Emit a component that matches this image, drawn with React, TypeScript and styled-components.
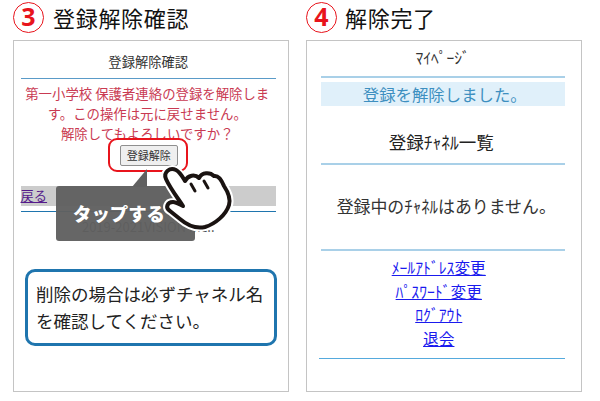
import React from "react";
import styled, { createGlobalStyle } from "styled-components";

const Global = createGlobalStyle`
  html, body { margin: 0; padding: 0; background: #fff; }
  body { font-family: "Noto Sans CJK JP", "Noto Sans", sans-serif; width: 600px; height: 401px; overflow: hidden; }
`;

const Page = styled.div`
  display: flex;
  gap: 17px;
  padding: 2px 0 0 13px;
`;
const Column = styled.section`
  display: flex;
  flex-direction: column;
  width: 276px;
`;
const Heading = styled.header`
  display: flex;
  align-items: center;
  gap: ${(p: { $gap: number }) => p.$gap}px;
  height: 31px;
  margin-bottom: 7px;
`;
const StepBadge = styled.span`
  box-sizing: border-box;
  width: 31px;
  height: 31px;
  flex: none;
  border: 1.5px solid #e8141c;
  border-radius: 50%;
  color: #e8141c;
  font: 700 25px/27px "Noto Sans", sans-serif;
  text-align: center;
`;
const HeadingText = styled.h2`
  margin: 0;
  font-size: 22px;
  font-weight: 400;
  line-height: 31px;
  color: #111;
  letter-spacing: 0.7px;
`;
const Panel = styled.div`
  position: relative;
  box-sizing: border-box;
  height: 352px;
  border: 1.5px solid #c4c4c4;
  border-bottom-width: 1px;
  overflow: hidden;
`;
const LeftInner = styled.div`
  display: flex;
  flex-direction: column;
  padding: 0 12px 0 6.5px;
`;
const PageTitle = styled.div`
  height: 37px;
  line-height: 42px;
  font-size: 13.3px;
  color: #333;
  text-align: center;
  border-bottom: 1px solid #5a9bc8;
`;
const Warning = styled.p`
  margin: 4px 0 0 -2px;
  font-size: 13.4px;
  line-height: 20px;
  color: #c93a52;
  text-align: center;
`;
const ConfirmButton = styled.button`
  align-self: center;
  box-sizing: border-box;
  width: 58px;
  height: 21px;
  margin-top: 2px;
  padding: 0;
  border: 1px solid #8f8f8f;
  border-radius: 2px;
  background: #efefef;
  color: #333;
  font: 400 11px/19px "Noto Sans CJK JP", sans-serif;
  position: relative;
  left: 0.5px;
`;
const BackBar = styled.div`
  margin-top: 20px;
  height: 20px;
  background: #cccccc;
  font-size: 13.3px;
  line-height: 20px;
`;
const BackLink = styled.a`
  color: #551a8b;
  text-decoration: underline;
`;
const FooterRule = styled.div`
  margin-top: 5px;
  height: 1px;
  background: #1f75ae;
`;
const Copyright = styled.div`
  margin-top: 5px;
  font-size: 13px;
  line-height: 20px;
  color: #444;
  text-align: center;
`;
const TapHighlight = styled.div`
  position: absolute;
  left: 94px;
  top: 97px;
  width: 80px;
  height: 34px;
  box-sizing: border-box;
  border: 2px solid #e8141c;
  border-radius: 9px;
`;
const Callout = styled.div`
  position: absolute;
  left: 42px;
  top: 145px;
  width: 139px;
  height: 55px;
  box-sizing: border-box;
  padding-left: 17px;
  border-radius: 3px;
  background: rgba(96, 96, 96, 0.96);
  color: #fff;
  font-size: 18.4px;
  font-weight: 900;
  line-height: 55px;
`;
const CalloutTail = styled.svg`
  position: absolute;
  left: 118px;
  top: 126px;
`;
const Hand = styled.svg`
  position: absolute;
  left: 146px;
  top: 123px;
`;
const NoteBox = styled.div`
  position: absolute;
  left: 11px;
  top: 228px;
  width: 252px;
  height: 77px;
  box-sizing: border-box;
  padding: 8px 0 0 8px;
  border: 3px solid #1f75ae;
  border-radius: 10px;
  background: #fff;
  font-size: 17.5px;
  line-height: 27px;
  color: #222;
`;
const RightInner = styled.div`
  display: flex;
  flex-direction: column;
  padding: 0 16.5px 0 14px;
`;
const Rule = styled.div`
  height: 2px;
  background: #a9d0e8;
`;
const MyPageTitle = styled.div`
  height: 35px;
  line-height: 32px;
  font-size: 15.5px;
  color: #333;
  text-align: center;
`;
const Notice = styled.div`
  height: 24px;
  margin-top: 4px;
  padding-left: 4px;
  background: #e0f0fa;
  color: #3d8fc0;
  font-size: 16.4px;
  line-height: 24px;
  text-align: center;
`;
const ListTitle = styled.div`
  height: 57px;
  line-height: 72px;
  font-size: 17.5px;
  padding-right: 3px;
  color: #222;
  text-align: center;
`;
const EmptyText = styled.div`
  height: 84px;
  padding-left: 7px;
  line-height: 81px;
  font-size: 16.9px;
  color: #333;
  text-align: center;
`;
const Links = styled.nav`
  display: flex;
  flex-direction: column;
  align-items: center;
  padding: 5px 8px 0 0;
  height: 107px;
  box-sizing: border-box;
`;
const MenuLink = styled.a`
  color: #1a1aee;
  text-decoration: underline;
  font-size: 15.7px;
  line-height: 23.7px;
`;
const BottomRule = styled.div`
  height: 1px;
  margin-left: -2px;
  background: #55aadd;
`;

const handOutline =
  "M166 179 C163 172 170 167 176 170 C180 172 182 176 185 181 C188 175 195 174 199 178 C202 172 210 172 214 176 C219 175 222 181 224 186 C228 192 231 198 229 205 C226 215 215 224 205 227 C196 229 187 225 180 219 L170 211 C165 208 167 202 173 202 C176 202 179 204 183 206 C177 197 170 188 166 179 Z";

export default function App() {
  return (
    <Page>
      <Global />
      <Column>
        <Heading $gap={9}>
          <StepBadge>3</StepBadge>
          <HeadingText>登録解除確認</HeadingText>
        </Heading>
        <Panel>
          <LeftInner>
            <PageTitle>登録解除確認</PageTitle>
            <Warning>
              第一小学校 保護者連絡の登録を解除します。この操作は元に戻せません。
              <br />
              解除してもよろしいですか？
            </Warning>
            <ConfirmButton>登録解除</ConfirmButton>
            <BackBar>
              <BackLink href="#">戻る</BackLink>
            </BackBar>
            <FooterRule />
            <Copyright>2019-2021VISION Inc..</Copyright>
          </LeftInner>
          <TapHighlight />
          <CalloutTail width="32" height="20" viewBox="0 0 32 20">
            <path d="M0 20 L15 2 V20 Z" fill="#606060" />
          </CalloutTail>
          <Callout>タップする</Callout>
          <Hand width="76" height="72" viewBox="160 164 76 72">
            <path d={handOutline} fill="#fff" stroke="#fff" strokeWidth="8" strokeLinejoin="round" />
            <path d={handOutline} fill="#fff" stroke="#1a1311" strokeWidth="4" strokeLinejoin="round" />
            <path d="M191 184 L195 191 M204 181 L208 188" stroke="#1a1311" strokeWidth="3" strokeLinecap="round" />
          </Hand>
          <NoteBox>
            削除の場合は必ずチャネル名
            <br />
            を確認してください。
          </NoteBox>
        </Panel>
      </Column>
      <Column>
        <Heading $gap={8}>
          <StepBadge>4</StepBadge>
          <HeadingText>解除完了</HeadingText>
        </Heading>
        <Panel>
          <RightInner>
            <MyPageTitle>ﾏｲﾍﾟｰｼﾞ</MyPageTitle>
            <Rule />
            <Notice>登録を解除しました。</Notice>
            <ListTitle>登録ﾁｬﾈﾙ一覧</ListTitle>
            <Rule />
            <EmptyText>登録中のﾁｬﾈﾙはありません。</EmptyText>
            <Rule />
            <Links>
              <MenuLink href="#">ﾒｰﾙｱﾄﾞﾚｽ変更</MenuLink>
              <MenuLink href="#">ﾊﾟｽﾜｰﾄﾞ変更</MenuLink>
              <MenuLink href="#">ﾛｸﾞｱｳﾄ</MenuLink>
              <MenuLink href="#">退会</MenuLink>
            </Links>
            <BottomRule />
          </RightInner>
        </Panel>
      </Column>
    </Page>
  );
}
